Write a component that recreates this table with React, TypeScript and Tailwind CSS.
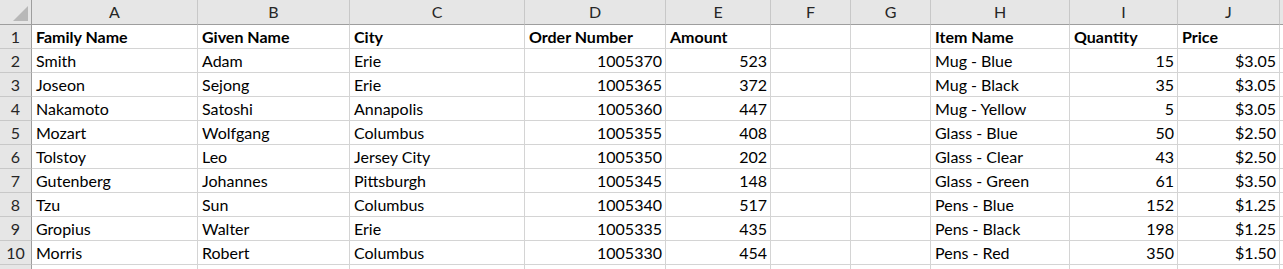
import React from 'react'

const cols = ['A', 'B', 'C', 'D', 'E', 'F', 'G', 'H', 'I', 'J']

type Cell = { v: string; r?: boolean }

const header: string[] = ['Family Name', 'Given Name', 'City', 'Order Number', 'Amount', '', '', 'Item Name', 'Quantity', 'Price']

const rows: string[][] = [
  ['Smith', 'Adam', 'Erie', '1005370', '523', '', '', 'Mug - Blue', '15', '$3.05'],
  ['Joseon', 'Sejong', 'Erie', '1005365', '372', '', '', 'Mug - Black', '35', '$3.05'],
  ['Nakamoto', 'Satoshi', 'Annapolis', '1005360', '447', '', '', 'Mug - Yellow', '5', '$3.05'],
  ['Mozart', 'Wolfgang', 'Columbus', '1005355', '408', '', '', 'Glass - Blue', '50', '$2.50'],
  ['Tolstoy', 'Leo', 'Jersey City', '1005350', '202', '', '', 'Glass - Clear', '43', '$2.50'],
  ['Gutenberg', 'Johannes', 'Pittsburgh', '1005345', '148', '', '', 'Glass - Green', '61', '$3.50'],
  ['Tzu', 'Sun', 'Columbus', '1005340', '517', '', '', 'Pens - Blue', '152', '$1.25'],
  ['Gropius', 'Walter', 'Erie', '1005335', '435', '', '', 'Pens - Black', '198', '$1.25'],
  ['Morris', 'Robert', 'Columbus', '1005330', '454', '', '', 'Pens - Red', '350', '$1.50'],
]

const rightCols = [3, 4, 8, 9]

function ColHeader({ label }: { label: string }) {
  return (
    <div className="h-[25px] bg-[#e6e6e6] border-r border-[#c8c8c8] border-b border-b-[#9e9e9e] flex items-center justify-center text-[16px] text-[#262626]">
      {label}
    </div>
  )
}

function RowHeader({ n }: { n?: number }) {
  return (
    <div className="h-[24px] bg-[#e6e6e6] border-r border-r-[#9e9e9e] border-b border-[#c8c8c8] flex items-center justify-center text-[16px] text-[#262626]">
      {n}
    </div>
  )
}

function DataCell({ c, bold }: { c: Cell; bold?: boolean }) {
  return (
    <div
      className={
        'h-[24px] border-r border-b border-[#d4d4d4] flex items-center pl-[4px] pr-[3px] pt-[1px] text-[16px] text-black whitespace-nowrap overflow-hidden ' +
        (c.r ? 'justify-end ' : 'justify-start ') +
        (bold ? 'font-bold' : '')
      }
    >
      {c.v}
    </div>
  )
}

export default function App() {
  return (
    <div
      className="w-[1283px] h-[269px] overflow-hidden bg-white"
      style={{ fontFamily: 'Lato, "Noto Sans", sans-serif' }}
    >
      <div className="grid grid-cols-[32px_166px_152px_175px_141px_105px_80px_80px_139px_108px_102px_40px]">
        {/* corner */}
        <div className="h-[25px] bg-[#e6e6e6] border-r border-r-[#9e9e9e] border-b border-b-[#9e9e9e] relative">
          <svg className="absolute right-[3px] bottom-[3px]" width="15" height="15" viewBox="0 0 15 15">
            <polygon points="15,0 15,15 0,15" fill="#b8b8b8" />
          </svg>
        </div>
        {cols.map((c) => (
          <ColHeader key={c} label={c} />
        ))}
        <div className="h-[25px] bg-[#e6e6e6] border-b border-b-[#9e9e9e]" />

        <RowHeader n={1} />
        {header.map((h, i) => (
          <DataCell key={i} c={{ v: h }} bold />
        ))}
        <div className="h-[24px] border-b border-[#d4d4d4]" />

        {rows.map((row, ri) => (
          <React.Fragment key={ri}>
            <RowHeader n={ri + 2} />
            {row.map((v, ci) => (
              <DataCell key={ci} c={{ v, r: rightCols.includes(ci) }} />
            ))}
            <div className="h-[24px] border-b border-[#d4d4d4]" />
          </React.Fragment>
        ))}

        <RowHeader />
        {cols.map((c) => (
          <DataCell key={c} c={{ v: '' }} />
        ))}
        <div className="h-[24px]" />
      </div>
    </div>
  )
}
